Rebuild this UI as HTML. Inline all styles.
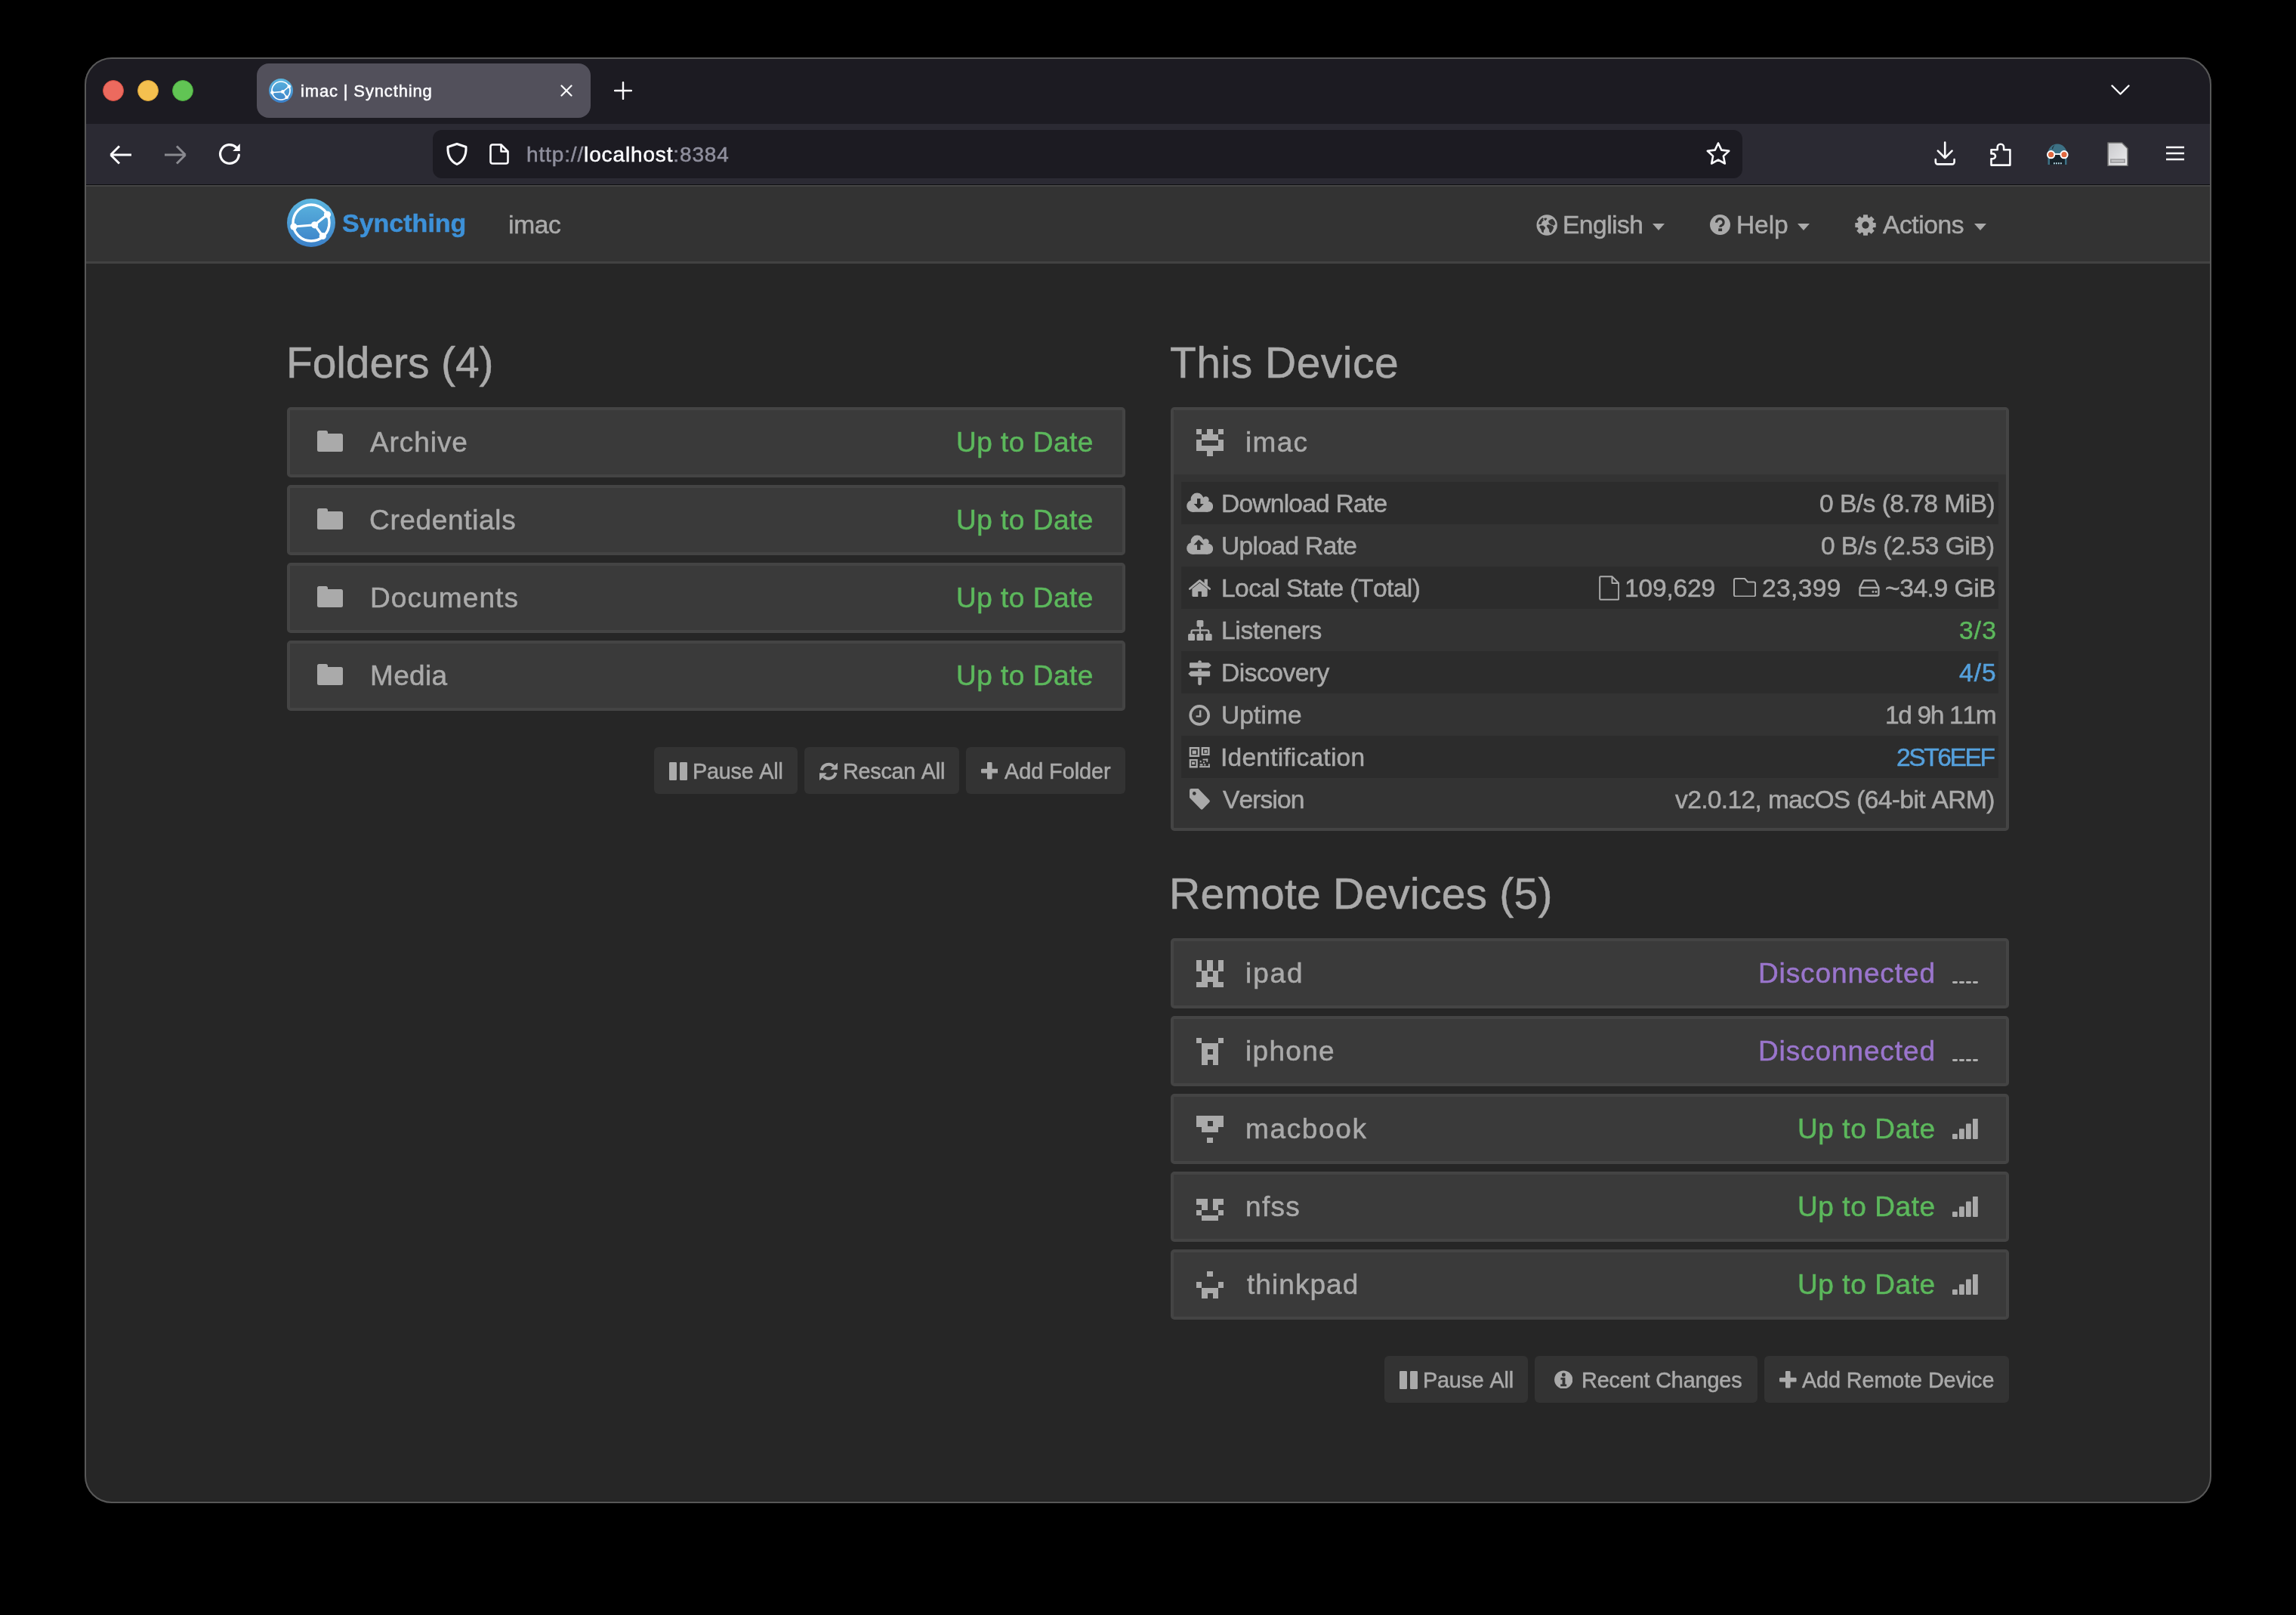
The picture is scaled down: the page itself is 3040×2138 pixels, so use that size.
<!DOCTYPE html>
<html><head><meta charset="utf-8"><title>imac | Syncthing</title>
<style>
html,body{margin:0;padding:0;}
body{width:3040px;height:2138px;background:#000;position:relative;overflow:hidden;font-family:"Liberation Sans",sans-serif;}
.t{position:absolute;white-space:pre;font-kerning:none;will-change:transform;-webkit-text-stroke:0.5px currentColor;}
.r{position:absolute;display:block;}
</style></head><body>
<div class="r" style="left:112px;top:76px;width:2816px;height:1914px;border-radius:36px;background:#262626;overflow:hidden;"><div class="r" style="left:0;top:0;width:100%;height:88px;background:#1c1b22"></div><div class="r" style="left:0;top:88px;width:100%;height:80px;background:#2b2a33"></div><div class="r" style="left:0;top:168px;width:100%;height:1px;background:#0e0e11"></div><div class="r" style="left:0;top:169px;width:100%;height:101px;background:#333333"></div><div class="r" style="left:0;top:169px;width:100%;height:2px;background:#454545"></div><div class="r" style="left:0;top:270px;width:100%;height:3px;background:#424242"></div></div>
<div class="r" style="left:112px;top:76px;width:2816px;height:1914px;border-radius:36px;box-sizing:border-box;border:2px solid #585858;"></div>
<div class="r" style="left:136px;top:106px;width:28px;height:28px;border-radius:50%;background:#ec6a5e;box-sizing:border-box;border:1px solid #d14b3f"></div>
<div class="r" style="left:182px;top:106px;width:28px;height:28px;border-radius:50%;background:#f4c04f;box-sizing:border-box;border:1px solid #d6a036"></div>
<div class="r" style="left:228px;top:106px;width:28px;height:28px;border-radius:50%;background:#61c454;box-sizing:border-box;border:1px solid #4aa63d"></div>
<div class="r" style="left:340px;top:84px;width:442px;height:72px;background:#52505b;border-radius:16px;"></div>
<svg class="r" style="left:356px;top:104px;width:32px;height:32px;" viewBox="4 4 64 64" preserveAspectRatio="none"><defs><linearGradient id="lga" x1="0" y1="0" x2="0" y2="1"><stop offset="0" stop-color="#5cb6df"/><stop offset="1" stop-color="#3b80c8"/></linearGradient></defs><circle cx="36" cy="36" r="32" fill="url(#lga)"/><circle cx="36" cy="36" r="24" fill="none" stroke="#fff" stroke-width="3.4"/><path d="M12.9 41 L40.6 38.8 L57.5 25 M40.6 38.8 L51.3 53.5" stroke="#fff" stroke-width="3.2" fill="none"/><circle cx="12.9" cy="41" r="4.6" fill="#fff"/><circle cx="40.6" cy="38.8" r="4.6" fill="#fff"/><circle cx="57.5" cy="25" r="4.6" fill="#fff"/><circle cx="51.3" cy="53.5" r="4.6" fill="#fff"/></svg>
<div class="t" style="left:397.90px;top:110.18px;font-size:22px;line-height:22px;letter-spacing:0.855px;color:#fbfbfe;font-weight:400;">imac | Syncthing</div>
<svg class="r" style="left:742px;top:112px;width:16px;height:16px;" viewBox="0 0 16 16" preserveAspectRatio="none"><path d="M1.5 1.5 L14.5 14.5 M14.5 1.5 L1.5 14.5" stroke="#fbfbfe" stroke-width="2.2" stroke-linecap="round"/></svg>
<svg class="r" style="left:813px;top:108px;width:24px;height:24px;" viewBox="0 0 24 24" preserveAspectRatio="none"><path d="M12 1 V23 M1 12 H23" stroke="#fbfbfe" stroke-width="2.4" stroke-linecap="round"/></svg>
<svg class="r" style="left:2795px;top:112px;width:25px;height:15px;" viewBox="0 0 25 15" preserveAspectRatio="none"><path d="M1.5 1.5 L12.5 12.5 L23.5 1.5" stroke="#fbfbfe" stroke-width="2.4" fill="none" stroke-linecap="round" stroke-linejoin="round"/></svg>
<svg class="r" style="left:144px;top:190px;width:32px;height:30px;" viewBox="0 0 32 30" preserveAspectRatio="none"><path d="M2.5 15 H30 M2.5 15 L14 3.5 M2.5 15 L14 26.5" stroke="#fbfbfe" stroke-width="3" fill="none" stroke-linecap="butt"/></svg>
<svg class="r" style="left:216px;top:190px;width:32px;height:30px;" viewBox="0 0 32 30" preserveAspectRatio="none"><path d="M29.5 15 H2 M29.5 15 L18 3.5 M29.5 15 L18 26.5" stroke="#8a8a90" stroke-width="3" fill="none"/></svg>
<svg class="r" style="left:288px;top:188px;width:32px;height:32px;" viewBox="0 0 32 32" preserveAspectRatio="none"><path d="M28.35 17.08 A12.4 12.4 0 1 1 24.77 7.23" stroke="#fbfbfe" stroke-width="3.2" fill="none" stroke-linecap="round"/><path d="M29.8 2.2 V12.1 H20.2 Z" fill="#fbfbfe"/></svg>
<div class="r" style="left:573px;top:172px;width:1734px;height:64px;background:#1c1b22;border-radius:12px;"></div>
<svg class="r" style="left:590px;top:188px;width:30px;height:32px;" viewBox="0 0 30 32" preserveAspectRatio="none"><path d="M15 2.5 L27 6.5 C27.5 17 23.5 25.5 15 29.5 C6.5 25.5 2.5 17 3 6.5 Z" stroke="#fbfbfe" stroke-width="3" fill="none" stroke-linejoin="round"/></svg>
<svg class="r" style="left:648px;top:190px;width:26px;height:28px;" viewBox="0 0 26 28" preserveAspectRatio="none"><path d="M4 1.5 H15.5 L24.5 10.5 V24 A2.5 2.5 0 0 1 22 26.5 H4 A2.5 2.5 0 0 1 1.5 24 V4 A2.5 2.5 0 0 1 4 1.5 Z M15.5 1.5 V10.5 H24.5" stroke="#fbfbfe" stroke-width="2.6" fill="none" stroke-linejoin="round"/></svg>
<div class="t" style="left:696.77px;top:191.30px;font-size:28px;line-height:28px;letter-spacing:0.861px;color:#8f8f9d">http:<span>&#47;&#47;</span><span style="color:#fbfbfe">localhost</span>:8384</div>
<svg class="r" style="left:2258px;top:187px;width:34px;height:34px;" viewBox="0 0 34 34" preserveAspectRatio="none"><path d="M17 2.5 L21.3 11.6 L31.2 12.8 L23.9 19.6 L25.8 29.5 L17 24.6 L8.2 29.5 L10.1 19.6 L2.8 12.8 L12.7 11.6 Z" stroke="#fbfbfe" stroke-width="2.6" fill="none" stroke-linejoin="round"/></svg>
<svg class="r" style="left:2561px;top:187px;width:28px;height:32px;" viewBox="0 0 28 32" preserveAspectRatio="none"><path d="M14.2 1.6 V21.6 M4.8 12.6 L14.2 22 L23.6 12.6 M1.8 24 V27.6 A2.8 2.8 0 0 0 4.6 30.4 H23.8 A2.8 2.8 0 0 0 26.6 27.6 V24" stroke="#fbfbfe" stroke-width="2.6" fill="none" stroke-linejoin="round" stroke-linecap="round"/></svg>
<svg class="r" style="left:2634px;top:187px;width:30px;height:34px;" viewBox="0 0 30 34" preserveAspectRatio="none"><path d="M2.5 11.3 H10.7 V8 A4.2 4.2 0 1 1 19.1 8 V11.3 H27.4 V31.6 H2.5 V23.2 H4.6 A3.4 3.4 0 0 0 4.6 16.4 H2.5 Z" stroke="#fbfbfe" stroke-width="2.6" fill="none" stroke-linejoin="round"/></svg>
<svg class="r" style="left:2708px;top:188px;width:32px;height:32px;" viewBox="0 0 32 32" preserveAspectRatio="none"><path d="M3.5 30 V15 A12.5 12.5 0 0 1 28.5 15 V30 Z" fill="#3d7185"/><path d="M6 30 V17 H26 V30 Z" fill="#17222a"/><path d="M9 8 A10 10 0 0 1 14 3 A9 9 0 0 0 10 10 Z" fill="#17222a"/><circle cx="7.6" cy="16.7" r="4.6" fill="#e0683f" stroke="#fff" stroke-width="2"/><circle cx="25" cy="16.7" r="4.6" fill="#e0683f" stroke="#fff" stroke-width="2"/><path d="M12 16 H20.5" stroke="#fff" stroke-width="1.8"/><rect x="11" y="27" width="1.8" height="2.4" rx="0.9" fill="#bfe3ee"/><rect x="14" y="27" width="1.8" height="2.4" rx="0.9" fill="#bfe3ee"/><rect x="17" y="27" width="1.8" height="2.4" rx="0.9" fill="#bfe3ee"/><rect x="20" y="27" width="1.8" height="2.4" rx="0.9" fill="#bfe3ee"/></svg>
<svg class="r" style="left:2790px;top:187.5px;width:28px;height:32.5px;" viewBox="0 0 28 32.5" preserveAspectRatio="none"><defs><linearGradient id="dg" x1="0" y1="0" x2="1" y2="1"><stop offset="0" stop-color="#c9c9cc"/><stop offset="1" stop-color="#ececee"/></linearGradient></defs><path d="M1 1 H19.5 L27 8.5 V31.5 H1 Z" fill="url(#dg)" stroke="#707070" stroke-width="1.6" stroke-linejoin="round"/><rect x="4" y="22.3" width="20" height="5.5" fill="#9b9b9d"/><rect x="5.6" y="23.8" width="16.8" height="2.4" fill="#c4c4c6"/></svg>
<svg class="r" style="left:2868px;top:193px;width:24px;height:20px;" viewBox="0 0 24 20" preserveAspectRatio="none"><path d="M0 2 H24 M0 10 H24 M0 18 H24" stroke="#fbfbfe" stroke-width="2.4"/></svg>
<svg class="r" style="left:380px;top:263px;width:64px;height:64px;" viewBox="4 4 64 64" preserveAspectRatio="none"><defs><linearGradient id="lgb" x1="0" y1="0" x2="0" y2="1"><stop offset="0" stop-color="#5cb6df"/><stop offset="1" stop-color="#3b80c8"/></linearGradient></defs><circle cx="36" cy="36" r="32" fill="url(#lgb)"/><circle cx="36" cy="36" r="24" fill="none" stroke="#fff" stroke-width="3.4"/><path d="M12.9 41 L40.6 38.8 L57.5 25 M40.6 38.8 L51.3 53.5" stroke="#fff" stroke-width="3.2" fill="none"/><circle cx="12.9" cy="41" r="4.6" fill="#fff"/><circle cx="40.6" cy="38.8" r="4.6" fill="#fff"/><circle cx="57.5" cy="25" r="4.6" fill="#fff"/><circle cx="51.3" cy="53.5" r="4.6" fill="#fff"/></svg>
<div class="t" style="left:452.80px;top:278.22px;font-size:34px;line-height:34px;letter-spacing:0.004px;color:#3d91d8;font-weight:700;">Syncthing</div>
<div class="t" style="left:673.00px;top:280.56px;font-size:33.6px;line-height:33.6px;letter-spacing:-0.335px;color:#aaa;font-weight:400;">imac</div>
<svg class="r" style="left:2034px;top:283.5px;width:28px;height:28.0px;" viewBox="0 0 28 28" preserveAspectRatio="none"><circle cx="14.2" cy="14" r="13.7" fill="#aaa"/><path d="M8 4.7 L9.3 5.2 L8.6 6.9 L9.6 7.8 L7.3 9.8 L6.7 12.4 L4.7 12.7 L3.3 12.4 L4.1 10.1 L5.7 7.2 Z" fill="#333" stroke="#333" stroke-width="0.8" stroke-linejoin="round"/><path d="M10.9 5.2 L13.5 4.9 L13.9 5.9 L11.9 7.8 L10.6 5.9 Z" fill="#333" stroke="#333" stroke-width="0.8" stroke-linejoin="round"/><path d="M5.4 15 L9.3 15 L11.6 17 L11.3 18.9 L9.6 20.9 L9.3 23.8 L7.7 22.9 L6.7 19.6 L4.7 17 Z" fill="#333" stroke="#333" stroke-width="0.8" stroke-linejoin="round"/><path d="M16.5 8.5 L19.1 6.9 L21.7 6.2 L24 9.1 L25 12.4 L23.3 14.4 L21.7 13.7 L19.7 13.1 L18.1 11.8 L17.1 11.1 L16.8 9.5 Z" fill="#333" stroke="#333" stroke-width="0.8" stroke-linejoin="round"/><path d="M14.5 14 L17.1 13.7 L19.4 14.4 L22 15.7 L22.7 17.6 L21.4 20.9 L19.1 24.2 L17.8 22.9 L17.1 19.3 L14.8 16.3 L14.2 15 Z" fill="#333" stroke="#333" stroke-width="0.8" stroke-linejoin="round"/></svg>
<div class="t" style="left:2068.90px;top:281.06px;font-size:33.6px;line-height:33.6px;letter-spacing:-0.526px;color:#aaa;font-weight:400;">English</div>
<svg class="r" style="left:2188px;top:296px;width:16px;height:9px;" viewBox="0 0 16 9" preserveAspectRatio="none"><path d="M0 0 H16 L8 9 Z" fill="#aaa"/></svg>
<svg class="r" style="left:2264px;top:284px;width:27px;height:27px;" viewBox="0 0 27 27" preserveAspectRatio="none"><circle cx="13.5" cy="13.5" r="13.5" fill="#aaa"/><path d="M8.8 10.6 A4.65 4.65 0 1 1 15.6 14.3 Q13.7 15.1 13.7 16.8" stroke="#333" stroke-width="3.3" fill="none"/><rect x="11.2" y="18.4" width="4.9" height="3.7" fill="#333"/></svg>
<div class="t" style="left:2299.00px;top:281.06px;font-size:33.6px;line-height:33.6px;letter-spacing:-0.128px;color:#aaa;font-weight:400;">Help</div>
<svg class="r" style="left:2380px;top:296px;width:16px;height:9px;" viewBox="0 0 16 9" preserveAspectRatio="none"><path d="M0 0 H16 L8 9 Z" fill="#aaa"/></svg>
<svg class="r" style="left:2455.8px;top:283.7px;width:28.0px;height:28.0px;" viewBox="0 0 28 28" preserveAspectRatio="none"><path d="M10.86 4.19 L11.08 0.31 L16.92 0.31 L17.14 4.19 L18.71 4.84 L21.62 2.25 L25.75 6.38 L23.16 9.29 L23.81 10.86 L27.69 11.08 L27.69 16.92 L23.81 17.14 L23.16 18.71 L25.75 21.62 L21.62 25.75 L18.71 23.16 L17.14 23.81 L16.92 27.69 L11.08 27.69 L10.86 23.81 L9.29 23.16 L6.38 25.75 L2.25 21.62 L4.84 18.71 L4.19 17.14 L0.31 16.92 L0.31 11.08 L4.19 10.86 L4.84 9.29 L2.25 6.38 L6.38 2.25 L9.29 4.84 Z" fill="#aaa"/><circle cx="14" cy="14" r="10.5" fill="#aaa"/><circle cx="14" cy="14" r="4.7" fill="#333"/></svg>
<div class="t" style="left:2493.20px;top:281.06px;font-size:33.6px;line-height:33.6px;letter-spacing:-0.421px;color:#aaa;font-weight:400;">Actions</div>
<svg class="r" style="left:2614px;top:296px;width:16px;height:9px;" viewBox="0 0 16 9" preserveAspectRatio="none"><path d="M0 0 H16 L8 9 Z" fill="#aaa"/></svg>
<div class="t" style="left:378.50px;top:452.35px;font-size:57px;line-height:57px;letter-spacing:-0.108px;color:#aaa;font-weight:400;">Folders (4)</div>
<div class="t" style="left:1549.20px;top:451.75px;font-size:57px;line-height:57px;letter-spacing:0.495px;color:#aaa;font-weight:400;">This Device</div>
<div class="t" style="left:1547.90px;top:1154.95px;font-size:57px;line-height:57px;letter-spacing:0.225px;color:#aaa;font-weight:400;">Remote Devices (5)</div>
<div class="r" style="left:380px;top:539px;width:1110px;height:93px;background:#3a3a3a;box-sizing:border-box;border:4px solid #444;border-radius:5px;"></div>
<svg class="r" style="left:420px;top:570px;width:34px;height:28px;" viewBox="0 0 34 28" preserveAspectRatio="none"><path d="M2.5 0 H11.5 A2.5 2.5 0 0 1 14 2.5 V4 H31.5 A2.5 2.5 0 0 1 34 6.5 V25.5 A2.5 2.5 0 0 1 31.5 28 H2.5 A2.5 2.5 0 0 1 0 25.5 V2.5 A2.5 2.5 0 0 1 2.5 0 Z" fill="#aaa"/></svg>
<div class="t" style="left:489.70px;top:566.68px;font-size:37px;line-height:37px;letter-spacing:0.917px;color:#aaa;font-weight:400;">Archive</div>
<div class="t" style="left:1266.20px;top:566.68px;font-size:37px;line-height:37px;letter-spacing:0.501px;color:#5cb85c;font-weight:400;">Up to Date</div>
<div class="r" style="left:380px;top:642px;width:1110px;height:93px;background:#3a3a3a;box-sizing:border-box;border:4px solid #444;border-radius:5px;"></div>
<svg class="r" style="left:420px;top:673px;width:34px;height:28px;" viewBox="0 0 34 28" preserveAspectRatio="none"><path d="M2.5 0 H11.5 A2.5 2.5 0 0 1 14 2.5 V4 H31.5 A2.5 2.5 0 0 1 34 6.5 V25.5 A2.5 2.5 0 0 1 31.5 28 H2.5 A2.5 2.5 0 0 1 0 25.5 V2.5 A2.5 2.5 0 0 1 2.5 0 Z" fill="#aaa"/></svg>
<div class="t" style="left:489.00px;top:669.68px;font-size:37px;line-height:37px;letter-spacing:0.655px;color:#aaa;font-weight:400;">Credentials</div>
<div class="t" style="left:1266.20px;top:669.68px;font-size:37px;line-height:37px;letter-spacing:0.501px;color:#5cb85c;font-weight:400;">Up to Date</div>
<div class="r" style="left:380px;top:745px;width:1110px;height:93px;background:#3a3a3a;box-sizing:border-box;border:4px solid #444;border-radius:5px;"></div>
<svg class="r" style="left:420px;top:776px;width:34px;height:28px;" viewBox="0 0 34 28" preserveAspectRatio="none"><path d="M2.5 0 H11.5 A2.5 2.5 0 0 1 14 2.5 V4 H31.5 A2.5 2.5 0 0 1 34 6.5 V25.5 A2.5 2.5 0 0 1 31.5 28 H2.5 A2.5 2.5 0 0 1 0 25.5 V2.5 A2.5 2.5 0 0 1 2.5 0 Z" fill="#aaa"/></svg>
<div class="t" style="left:489.50px;top:772.68px;font-size:37px;line-height:37px;letter-spacing:1.109px;color:#aaa;font-weight:400;">Documents</div>
<div class="t" style="left:1266.20px;top:772.68px;font-size:37px;line-height:37px;letter-spacing:0.501px;color:#5cb85c;font-weight:400;">Up to Date</div>
<div class="r" style="left:380px;top:848px;width:1110px;height:93px;background:#3a3a3a;box-sizing:border-box;border:4px solid #444;border-radius:5px;"></div>
<svg class="r" style="left:420px;top:879px;width:34px;height:28px;" viewBox="0 0 34 28" preserveAspectRatio="none"><path d="M2.5 0 H11.5 A2.5 2.5 0 0 1 14 2.5 V4 H31.5 A2.5 2.5 0 0 1 34 6.5 V25.5 A2.5 2.5 0 0 1 31.5 28 H2.5 A2.5 2.5 0 0 1 0 25.5 V2.5 A2.5 2.5 0 0 1 2.5 0 Z" fill="#aaa"/></svg>
<div class="t" style="left:490.00px;top:875.68px;font-size:37px;line-height:37px;letter-spacing:0.351px;color:#aaa;font-weight:400;">Media</div>
<div class="t" style="left:1266.20px;top:875.68px;font-size:37px;line-height:37px;letter-spacing:0.501px;color:#5cb85c;font-weight:400;">Up to Date</div>
<div class="r" style="left:866px;top:989px;width:190px;height:62px;background:#333;border-radius:6px;"></div>
<svg class="r" style="left:886px;top:1009px;width:24px;height:24px;" viewBox="0 0 24 24" preserveAspectRatio="none"><rect x="0" y="0" width="10" height="24" rx="1.2" fill="#aaa"/><rect x="14" y="0" width="10" height="24" rx="1.2" fill="#aaa"/></svg>
<div class="t" style="left:916.80px;top:1006.62px;font-size:28.8px;line-height:28.8px;letter-spacing:-0.232px;color:#aaa;font-weight:400;">Pause All</div>
<div class="r" style="left:1065px;top:989px;width:205px;height:62px;background:#333;border-radius:6px;"></div>
<svg class="r" style="left:1085px;top:1009px;width:24.40000000000009px;height:24.40000000000009px;" viewBox="0 0 24.4 24.4" preserveAspectRatio="none"><path d="M2.94 10.57 A9.4 9.4 0 0 1 18.85 5.55" stroke="#aaa" stroke-width="4" fill="none"/><path d="M24.4 0.6 V9.6 H15.4 Z" fill="#aaa" stroke="#aaa" stroke-width="0.8" stroke-linejoin="round"/><path d="M21.46 13.83 A9.4 9.4 0 0 1 5.55 18.85" stroke="#aaa" stroke-width="4" fill="none"/><path d="M0 23.8 V14.8 H9 Z" fill="#aaa" stroke="#aaa" stroke-width="0.8" stroke-linejoin="round"/></svg>
<div class="t" style="left:1115.50px;top:1006.62px;font-size:28.8px;line-height:28.8px;letter-spacing:-0.261px;color:#aaa;font-weight:400;">Rescan All</div>
<div class="r" style="left:1279px;top:989px;width:211px;height:62px;background:#333;border-radius:6px;"></div>
<svg class="r" style="left:1298.8px;top:1009px;width:22.600000000000136px;height:22.59999999999991px;" viewBox="0 0 22.6 22.6" preserveAspectRatio="none"><path d="M8.7 0 H13.3 A1.3 1.3 0 0 1 14.6 1.3 V8.7 H21.3 A1.3 1.3 0 0 1 22.6 10 V13.3 A1.3 1.3 0 0 1 21.3 14.6 H14.6 V21.3 A1.3 1.3 0 0 1 13.3 22.6 H9.3 A1.3 1.3 0 0 1 8 21.3 V14.6 H1.3 A1.3 1.3 0 0 1 0 13.3 V10 A1.3 1.3 0 0 1 1.3 8.7 H8 V1.3 A1.3 1.3 0 0 1 8.7 0 Z" fill="#aaa"/></svg>
<div class="t" style="left:1330.00px;top:1006.62px;font-size:28.8px;line-height:28.8px;letter-spacing:-0.030px;color:#aaa;font-weight:400;">Add Folder</div>
<div class="r" style="left:1550px;top:539px;width:1110px;height:561px;background:#333333;box-sizing:border-box;border:4px solid #444;border-radius:5px;"></div>
<div class="r" style="left:1554px;top:543px;width:1102px;height:85px;background:#3a3a3a;border-radius:2px 2px 0 0;"></div>
<svg class="r" style="left:1584px;top:568px;width:36px;height:36px;shape-rendering:crispEdges;" viewBox="0 0 5 5" preserveAspectRatio="none"><rect x="0" y="0" width="1.02" height="1.02" fill="#aaa"/><rect x="2" y="0" width="1.02" height="1.02" fill="#aaa"/><rect x="4" y="0" width="1.02" height="1.02" fill="#aaa"/><rect x="1" y="1" width="1.02" height="1.02" fill="#aaa"/><rect x="2" y="1" width="1.02" height="1.02" fill="#aaa"/><rect x="3" y="1" width="1.02" height="1.02" fill="#aaa"/><rect x="0" y="2" width="1.02" height="1.02" fill="#aaa"/><rect x="4" y="2" width="1.02" height="1.02" fill="#aaa"/><rect x="0" y="3" width="1.02" height="1.02" fill="#aaa"/><rect x="1" y="3" width="1.02" height="1.02" fill="#aaa"/><rect x="2" y="3" width="1.02" height="1.02" fill="#aaa"/><rect x="3" y="3" width="1.02" height="1.02" fill="#aaa"/><rect x="4" y="3" width="1.02" height="1.02" fill="#aaa"/><rect x="2" y="4" width="1.02" height="1.02" fill="#aaa"/></svg>
<div class="t" style="left:1648.90px;top:566.88px;font-size:37px;line-height:37px;letter-spacing:1.294px;color:#aaa;font-weight:400;">imac</div>
<div class="r" style="left:1564px;top:638px;width:1082px;height:56px;background:#2c2c2c;"></div>
<div class="r" style="left:1564px;top:750px;width:1082px;height:56px;background:#2c2c2c;"></div>
<div class="r" style="left:1564px;top:862px;width:1082px;height:56px;background:#2c2c2c;"></div>
<div class="r" style="left:1564px;top:974px;width:1082px;height:56px;background:#2c2c2c;"></div>
<div class="t" style="left:1617.20px;top:649.56px;font-size:33.6px;line-height:33.6px;letter-spacing:-0.793px;color:#aaa;font-weight:400;">Download Rate</div>
<div class="t" style="left:1617.20px;top:705.56px;font-size:33.6px;line-height:33.6px;letter-spacing:-0.669px;color:#aaa;font-weight:400;">Upload Rate</div>
<div class="t" style="left:1617.20px;top:761.56px;font-size:33.6px;line-height:33.6px;letter-spacing:-0.580px;color:#aaa;font-weight:400;">Local State (Total)</div>
<div class="t" style="left:1617.20px;top:817.56px;font-size:33.6px;line-height:33.6px;letter-spacing:-0.370px;color:#aaa;font-weight:400;">Listeners</div>
<div class="t" style="left:1617.20px;top:873.56px;font-size:33.6px;line-height:33.6px;letter-spacing:-0.513px;color:#aaa;font-weight:400;">Discovery</div>
<div class="t" style="left:1617.20px;top:929.56px;font-size:33.6px;line-height:33.6px;letter-spacing:0.043px;color:#aaa;font-weight:400;">Uptime</div>
<div class="t" style="left:1616.20px;top:985.56px;font-size:33.6px;line-height:33.6px;letter-spacing:0.196px;color:#aaa;font-weight:400;">Identification</div>
<div class="t" style="left:1619.20px;top:1041.56px;font-size:33.6px;line-height:33.6px;letter-spacing:-0.887px;color:#aaa;font-weight:400;">Version</div>
<div class="t" style="left:2408.60px;top:649.56px;font-size:33.6px;line-height:33.6px;letter-spacing:-0.536px;color:#aaa;font-weight:400;">0 B/s (8.78 MiB)</div>
<div class="t" style="left:2411.20px;top:705.56px;font-size:33.6px;line-height:33.6px;letter-spacing:-0.586px;color:#aaa;font-weight:400;">0 B/s (2.53 GiB)</div>
<div class="t" style="left:2593.90px;top:817.56px;font-size:33.6px;line-height:33.6px;letter-spacing:1.098px;color:#5cb85c;font-weight:400;">3/3</div>
<div class="t" style="left:2594.00px;top:873.56px;font-size:33.6px;line-height:33.6px;letter-spacing:1.048px;color:#55a0dc;font-weight:400;">4/5</div>
<div class="t" style="left:2495.90px;top:929.56px;font-size:33.6px;line-height:33.6px;letter-spacing:-1.377px;color:#aaa;font-weight:400;">1d 9h 11m</div>
<div class="t" style="left:2511.20px;top:985.56px;font-size:33.6px;line-height:33.6px;letter-spacing:-2.442px;color:#55a0dc;font-weight:400;">2ST6EEF</div>
<div class="t" style="left:2217.50px;top:1041.56px;font-size:33.6px;line-height:33.6px;letter-spacing:-0.654px;color:#aaa;font-weight:400;">v2.0.12, macOS (64-bit ARM)</div>
<svg class="r" style="left:2116.8px;top:762px;width:27.399999999999636px;height:33px;" viewBox="0 0 27.4 33" preserveAspectRatio="none"><path d="M1.2 2.2 A1 1 0 0 1 2.2 1.2 H17.5 L26.2 10 V30.8 A1 1 0 0 1 25.2 31.8 H2.2 A1 1 0 0 1 1.2 30.8 Z M17.5 1.2 V10 H26.2" stroke="#aaa" stroke-width="2" fill="none" stroke-linejoin="round"/></svg>
<div class="t" style="left:2150.90px;top:761.56px;font-size:33.6px;line-height:33.6px;letter-spacing:-0.184px;color:#aaa;font-weight:400;">109,629</div>
<svg class="r" style="left:2294.7px;top:764.8px;width:30.100000000000364px;height:25.40000000000009px;" viewBox="0 0 30 25.4" preserveAspectRatio="none"><path d="M3 1 H15 L19 5.5 H27 A2 2 0 0 1 29 7.5 V22.4 A2 2 0 0 1 27 24.4 H3 A2 2 0 0 1 1 22.4 V3 A2 2 0 0 1 3 1 Z" stroke="#aaa" stroke-width="2" fill="none" stroke-linejoin="round"/></svg>
<div class="t" style="left:2332.90px;top:761.56px;font-size:33.6px;line-height:33.6px;letter-spacing:0.335px;color:#aaa;font-weight:400;">23,399</div>
<svg class="r" style="left:2460.7px;top:767px;width:27.90000000000009px;height:23px;" viewBox="0 0 28 23" preserveAspectRatio="none"><path d="M6.5 1.5 H21.5 L26.5 11 V20 A1.5 1.5 0 0 1 25 21.5 H3 A1.5 1.5 0 0 1 1.5 20 V11 Z M1.5 11 H26.5" stroke="#aaa" stroke-width="2.4" fill="none" stroke-linejoin="round"/><circle cx="19" cy="16.5" r="1.4" fill="#aaa"/><circle cx="23" cy="16.5" r="1.4" fill="#aaa"/></svg>
<div class="t" style="left:2496.40px;top:761.56px;font-size:33.6px;line-height:33.6px;letter-spacing:-0.446px;color:#aaa;font-weight:400;">~34.9 GiB</div>
<svg class="r" style="left:1571.3px;top:652px;width:34.5px;height:26px;" viewBox="0 0 34.5 26" preserveAspectRatio="none"><circle cx="14" cy="8.9" r="8.4" fill="#aaa"/><circle cx="25.5" cy="9.4" r="4.2" fill="#aaa"/><circle cx="28" cy="18.6" r="7.2" fill="#aaa"/><circle cx="8.2" cy="17.9" r="8" fill="#aaa"/><rect x="8.2" y="12" width="19.8" height="13.8" fill="#aaa"/><path d="M14 8 H18.4 V15 H22.8 L16.2 21.8 L9.6 15 H14 Z" fill="#2c2c2c"/></svg>
<svg class="r" style="left:1571.3px;top:708px;width:34.5px;height:26px;" viewBox="0 0 34.5 26" preserveAspectRatio="none"><circle cx="14" cy="8.9" r="8.4" fill="#aaa"/><circle cx="25.5" cy="9.4" r="4.2" fill="#aaa"/><circle cx="28" cy="18.6" r="7.2" fill="#aaa"/><circle cx="8.2" cy="17.9" r="8" fill="#aaa"/><rect x="8.2" y="12" width="19.8" height="13.8" fill="#aaa"/><path d="M14 20 H18.4 V13.2 H22.8 L16.2 6.2 L9.6 13.2 H14 Z" fill="#333"/></svg>
<svg class="r" style="left:1574px;top:766px;width:29px;height:24px;" viewBox="0 -1 29 24" preserveAspectRatio="none"><path d="M1.3 12.5 L14.5 1.7 L27.7 12.5" stroke="#aaa" stroke-width="2.8" stroke-linecap="round" stroke-linejoin="round" fill="none"/><path d="M20.6 -0.3 H24.9 V9 L20.6 5.5 Z" fill="#aaa"/><path d="M4.4 12.4 L14.5 4.6 L24.7 12.4 V21.6 A1.4 1.4 0 0 1 23.3 23 H16.9 V16 H12.3 V23 H5.8 A1.4 1.4 0 0 1 4.4 21.6 Z" fill="#aaa"/></svg>
<svg class="r" style="left:1572.5px;top:821px;width:32.0px;height:27px;" viewBox="0 0 32 27" preserveAspectRatio="none"><rect x="11.6" y="0" width="8.8" height="8.8" rx="1.6" fill="#aaa"/><path d="M16 8 V18.5 M4.5 18.5 V15.4 A2 2 0 0 1 6.5 13.4 H25.4 A2 2 0 0 1 27.4 15.4 V18.5" stroke="#aaa" stroke-width="2.3" fill="none"/><rect x="0.1" y="18.1" width="8.9" height="9" rx="1.6" fill="#aaa"/><rect x="11.6" y="18.1" width="8.8" height="9" rx="1.6" fill="#aaa"/><rect x="23" y="18.1" width="8.7" height="9" rx="1.6" fill="#aaa"/></svg>
<svg class="r" style="left:1572px;top:873.5px;width:34px;height:34.0px;" viewBox="0 -1 34 34" preserveAspectRatio="none"><path d="M14.2 2.3 V1.6 A2.35 2.35 0 0 1 18.9 1.6 V2.3 Z" fill="#aaa"/><path d="M3 3.3 A1 1 0 0 1 4 2.3 H28.3 L31.8 5.8 L28.3 9.3 H4 A1 1 0 0 1 3 8.3 Z" fill="#aaa"/><rect x="14.2" y="10.4" width="4.7" height="3.3" fill="#aaa"/><path d="M30.1 14.5 A1 1 0 0 0 29.1 13.5 H4.8 L1.2 17 L4.8 20.5 H29.1 A1 1 0 0 0 30.1 19.5 Z" fill="#aaa"/><path d="M14.2 21.4 H18.9 V30 A2.35 2.35 0 0 1 14.2 30 Z" fill="#aaa"/></svg>
<svg class="r" style="left:1574.3px;top:932.5px;width:28.0px;height:28.0px;" viewBox="0 0 28 28" preserveAspectRatio="none"><circle cx="14.2" cy="13.9" r="12" stroke="#aaa" stroke-width="3.6" fill="none"/><path d="M15.2 7.2 V15.4 H9.6" stroke="#aaa" stroke-width="2.4" fill="none"/></svg>
<svg class="r" style="left:1574.3px;top:988.7px;width:28.0px;height:28.0px;" viewBox="0 0 28 28" preserveAspectRatio="none"><path d="M1.9 1.3 H13 V11.8 H1.9 Z M17.8 1.3 H26.4 V9.9 H17.8 Z M1.9 17.1 H10.6 V26.2 H1.9 Z" stroke="#aaa" stroke-width="2.4" fill="none"/><rect x="4.6" y="4.4" width="5.3" height="4.8" fill="#aaa"/><rect x="20.4" y="3.9" width="3.9" height="3.8" fill="#aaa"/><rect x="4.1" y="19.7" width="3.9" height="3.4" fill="#aaa"/><rect x="18.5" y="15.6" width="6.7" height="1.9" fill="#aaa"/><rect x="23.4" y="15.6" width="1.8" height="4.2" fill="#aaa"/><rect x="14.7" y="17.9" width="1.9" height="2.4" fill="#aaa"/><rect x="14.7" y="22.2" width="3.8" height="2.4" fill="#aaa"/><rect x="20.4" y="22.2" width="1.9" height="2.4" fill="#aaa"/><rect x="14.2" y="25.1" width="8.6" height="2" fill="#aaa"/><rect x="25.9" y="22.2" width="1.9" height="4.9" fill="#aaa"/><rect x="22.5" y="25.1" width="5.3" height="2" fill="#aaa"/><rect x="19" y="19.3" width="2" height="2" fill="#aaa"/></svg>
<svg class="r" style="left:1575px;top:1044.4px;width:27px;height:27.799999999999955px;" viewBox="0 0 28 28" preserveAspectRatio="none"><path d="M0 2.5 A2.5 2.5 0 0 1 2.5 0 H12 L27 15 A2.5 2.5 0 0 1 27 18.5 L18.5 27 A2.5 2.5 0 0 1 15 27 L0 12 Z" fill="#aaa"/><circle cx="6.5" cy="6.5" r="2.4" fill="#323232"/></svg>
<div class="r" style="left:1550px;top:1242px;width:1110px;height:93px;background:#3a3a3a;box-sizing:border-box;border:4px solid #444;border-radius:5px;"></div>
<svg class="r" style="left:1584px;top:1271px;width:36px;height:36px;shape-rendering:crispEdges;" viewBox="0 0 5 5" preserveAspectRatio="none"><rect x="0" y="0" width="1.02" height="1.02" fill="#aaa"/><rect x="2" y="0" width="1.02" height="1.02" fill="#aaa"/><rect x="4" y="0" width="1.02" height="1.02" fill="#aaa"/><rect x="0" y="1" width="1.02" height="1.02" fill="#aaa"/><rect x="2" y="1" width="1.02" height="1.02" fill="#aaa"/><rect x="4" y="1" width="1.02" height="1.02" fill="#aaa"/><rect x="1" y="2" width="1.02" height="1.02" fill="#aaa"/><rect x="3" y="2" width="1.02" height="1.02" fill="#aaa"/><rect x="1" y="3" width="1.02" height="1.02" fill="#aaa"/><rect x="2" y="3" width="1.02" height="1.02" fill="#aaa"/><rect x="3" y="3" width="1.02" height="1.02" fill="#aaa"/><rect x="0" y="4" width="1.02" height="1.02" fill="#aaa"/><rect x="1" y="4" width="1.02" height="1.02" fill="#aaa"/><rect x="3" y="4" width="1.02" height="1.02" fill="#aaa"/><rect x="4" y="4" width="1.02" height="1.02" fill="#aaa"/></svg>
<div class="t" style="left:1648.90px;top:1269.68px;font-size:37px;line-height:37px;letter-spacing:1.908px;color:#aaa;font-weight:400;">ipad</div>
<div class="t" style="left:2328.00px;top:1269.68px;font-size:37px;line-height:37px;letter-spacing:0.890px;color:#9a75cc;font-weight:400;">Disconnected</div>
<svg class="r" style="left:2585px;top:1299px;width:34px;height:2.900000000000091px;" viewBox="0 0 34 2.9" preserveAspectRatio="none"><rect x="0" y="0" width="7" height="2.9" rx="1.4" fill="#b0b0b0"/><rect x="9" y="0" width="7" height="2.9" rx="1.4" fill="#b0b0b0"/><rect x="18" y="0" width="7" height="2.9" rx="1.4" fill="#b0b0b0"/><rect x="27" y="0" width="7" height="2.9" rx="1.4" fill="#b0b0b0"/></svg>
<div class="r" style="left:1550px;top:1345px;width:1110px;height:93px;background:#3a3a3a;box-sizing:border-box;border:4px solid #444;border-radius:5px;"></div>
<svg class="r" style="left:1584px;top:1374px;width:36px;height:36px;shape-rendering:crispEdges;" viewBox="0 0 5 5" preserveAspectRatio="none"><rect x="0" y="0" width="1.02" height="1.02" fill="#aaa"/><rect x="4" y="0" width="1.02" height="1.02" fill="#aaa"/><rect x="1" y="1" width="1.02" height="1.02" fill="#aaa"/><rect x="2" y="1" width="1.02" height="1.02" fill="#aaa"/><rect x="3" y="1" width="1.02" height="1.02" fill="#aaa"/><rect x="1" y="2" width="1.02" height="1.02" fill="#aaa"/><rect x="3" y="2" width="1.02" height="1.02" fill="#aaa"/><rect x="1" y="3" width="1.02" height="1.02" fill="#aaa"/><rect x="2" y="3" width="1.02" height="1.02" fill="#aaa"/><rect x="3" y="3" width="1.02" height="1.02" fill="#aaa"/><rect x="1" y="4" width="1.02" height="1.02" fill="#aaa"/><rect x="3" y="4" width="1.02" height="1.02" fill="#aaa"/></svg>
<div class="t" style="left:1648.90px;top:1372.68px;font-size:37px;line-height:37px;letter-spacing:1.314px;color:#aaa;font-weight:400;">iphone</div>
<div class="t" style="left:2328.00px;top:1372.68px;font-size:37px;line-height:37px;letter-spacing:0.890px;color:#9a75cc;font-weight:400;">Disconnected</div>
<svg class="r" style="left:2585px;top:1402px;width:34px;height:2.900000000000091px;" viewBox="0 0 34 2.9" preserveAspectRatio="none"><rect x="0" y="0" width="7" height="2.9" rx="1.4" fill="#b0b0b0"/><rect x="9" y="0" width="7" height="2.9" rx="1.4" fill="#b0b0b0"/><rect x="18" y="0" width="7" height="2.9" rx="1.4" fill="#b0b0b0"/><rect x="27" y="0" width="7" height="2.9" rx="1.4" fill="#b0b0b0"/></svg>
<div class="r" style="left:1550px;top:1448px;width:1110px;height:93px;background:#3a3a3a;box-sizing:border-box;border:4px solid #444;border-radius:5px;"></div>
<svg class="r" style="left:1584px;top:1477px;width:36px;height:36px;shape-rendering:crispEdges;" viewBox="0 0 5 5" preserveAspectRatio="none"><rect x="0" y="0" width="1.02" height="1.02" fill="#aaa"/><rect x="1" y="0" width="1.02" height="1.02" fill="#aaa"/><rect x="2" y="0" width="1.02" height="1.02" fill="#aaa"/><rect x="3" y="0" width="1.02" height="1.02" fill="#aaa"/><rect x="4" y="0" width="1.02" height="1.02" fill="#aaa"/><rect x="0" y="1" width="1.02" height="1.02" fill="#aaa"/><rect x="1" y="1" width="1.02" height="1.02" fill="#aaa"/><rect x="3" y="1" width="1.02" height="1.02" fill="#aaa"/><rect x="4" y="1" width="1.02" height="1.02" fill="#aaa"/><rect x="1" y="2" width="1.02" height="1.02" fill="#aaa"/><rect x="2" y="2" width="1.02" height="1.02" fill="#aaa"/><rect x="3" y="2" width="1.02" height="1.02" fill="#aaa"/><rect x="2" y="4" width="1.02" height="1.02" fill="#aaa"/></svg>
<div class="t" style="left:1648.60px;top:1475.68px;font-size:37px;line-height:37px;letter-spacing:1.628px;color:#aaa;font-weight:400;">macbook</div>
<div class="t" style="left:2380.40px;top:1475.68px;font-size:37px;line-height:37px;letter-spacing:0.590px;color:#5cb85c;font-weight:400;">Up to Date</div>
<svg class="r" style="left:2585px;top:1480.5px;width:34px;height:27.0px;" viewBox="0 0 34 27" preserveAspectRatio="none"><rect x="0" y="20.0" width="6.8" height="7.0" rx="1" fill="#aaa"/><rect x="9" y="13.2" width="6.8" height="13.8" rx="1" fill="#aaa"/><rect x="18" y="6.4" width="6.8" height="20.6" rx="1" fill="#aaa"/><rect x="27" y="-0.3999999999999999" width="6.8" height="27.4" rx="1" fill="#aaa"/></svg>
<div class="r" style="left:1550px;top:1551px;width:1110px;height:93px;background:#3a3a3a;box-sizing:border-box;border:4px solid #444;border-radius:5px;"></div>
<svg class="r" style="left:1584px;top:1580px;width:36px;height:36px;shape-rendering:crispEdges;" viewBox="0 0 5 5" preserveAspectRatio="none"><rect x="0" y="1" width="1.02" height="1.02" fill="#aaa"/><rect x="1" y="1" width="1.02" height="1.02" fill="#aaa"/><rect x="3" y="1" width="1.02" height="1.02" fill="#aaa"/><rect x="4" y="1" width="1.02" height="1.02" fill="#aaa"/><rect x="1" y="2" width="1.02" height="1.02" fill="#aaa"/><rect x="3" y="2" width="1.02" height="1.02" fill="#aaa"/><rect x="0" y="3" width="1.02" height="1.02" fill="#aaa"/><rect x="4" y="3" width="1.02" height="1.02" fill="#aaa"/><rect x="1" y="4" width="1.02" height="1.02" fill="#aaa"/><rect x="2" y="4" width="1.02" height="1.02" fill="#aaa"/><rect x="3" y="4" width="1.02" height="1.02" fill="#aaa"/></svg>
<div class="t" style="left:1648.70px;top:1578.68px;font-size:37px;line-height:37px;letter-spacing:1.314px;color:#aaa;font-weight:400;">nfss</div>
<div class="t" style="left:2380.40px;top:1578.68px;font-size:37px;line-height:37px;letter-spacing:0.590px;color:#5cb85c;font-weight:400;">Up to Date</div>
<svg class="r" style="left:2585px;top:1583.5px;width:34px;height:27.0px;" viewBox="0 0 34 27" preserveAspectRatio="none"><rect x="0" y="20.0" width="6.8" height="7.0" rx="1" fill="#aaa"/><rect x="9" y="13.2" width="6.8" height="13.8" rx="1" fill="#aaa"/><rect x="18" y="6.4" width="6.8" height="20.6" rx="1" fill="#aaa"/><rect x="27" y="-0.3999999999999999" width="6.8" height="27.4" rx="1" fill="#aaa"/></svg>
<div class="r" style="left:1550px;top:1654px;width:1110px;height:93px;background:#3a3a3a;box-sizing:border-box;border:4px solid #444;border-radius:5px;"></div>
<svg class="r" style="left:1584px;top:1683px;width:36px;height:36px;shape-rendering:crispEdges;" viewBox="0 0 5 5" preserveAspectRatio="none"><rect x="2" y="0" width="1.02" height="1.02" fill="#aaa"/><rect x="0" y="2" width="1.02" height="1.02" fill="#aaa"/><rect x="4" y="2" width="1.02" height="1.02" fill="#aaa"/><rect x="1" y="3" width="1.02" height="1.02" fill="#aaa"/><rect x="2" y="3" width="1.02" height="1.02" fill="#aaa"/><rect x="3" y="3" width="1.02" height="1.02" fill="#aaa"/><rect x="1" y="4" width="1.02" height="1.02" fill="#aaa"/><rect x="3" y="4" width="1.02" height="1.02" fill="#aaa"/></svg>
<div class="t" style="left:1650.50px;top:1681.68px;font-size:37px;line-height:37px;letter-spacing:1.056px;color:#aaa;font-weight:400;">thinkpad</div>
<div class="t" style="left:2380.40px;top:1681.68px;font-size:37px;line-height:37px;letter-spacing:0.590px;color:#5cb85c;font-weight:400;">Up to Date</div>
<svg class="r" style="left:2585px;top:1686.5px;width:34px;height:27.0px;" viewBox="0 0 34 27" preserveAspectRatio="none"><rect x="0" y="20.0" width="6.8" height="7.0" rx="1" fill="#aaa"/><rect x="9" y="13.2" width="6.8" height="13.8" rx="1" fill="#aaa"/><rect x="18" y="6.4" width="6.8" height="20.6" rx="1" fill="#aaa"/><rect x="27" y="-0.3999999999999999" width="6.8" height="27.4" rx="1" fill="#aaa"/></svg>
<div class="r" style="left:1833px;top:1795px;width:190px;height:62px;background:#333;border-radius:6px;"></div>
<svg class="r" style="left:1853px;top:1815px;width:24px;height:24px;" viewBox="0 0 24 24" preserveAspectRatio="none"><rect x="0" y="0" width="10" height="24" rx="1.2" fill="#aaa"/><rect x="14" y="0" width="10" height="24" rx="1.2" fill="#aaa"/></svg>
<div class="t" style="left:1883.50px;top:1812.62px;font-size:28.8px;line-height:28.8px;letter-spacing:-0.195px;color:#aaa;font-weight:400;">Pause All</div>
<div class="r" style="left:2032px;top:1795px;width:295px;height:62px;background:#333;border-radius:6px;"></div>
<svg class="r" style="left:2057.8px;top:1814px;width:24.399999999999636px;height:24.40000000000009px;" viewBox="0 0 24.4 24.4" preserveAspectRatio="none"><circle cx="12.2" cy="12.5" r="12.1" fill="#aaa"/><circle cx="12.4" cy="5.9" r="2.5" fill="#333"/><path d="M8.4 9.8 H14.4 V18.5 H16.2 V21.2 H8.2 V18.5 H10.6 V12.4 H8.4 Z" fill="#333"/></svg>
<div class="t" style="left:2093.80px;top:1812.62px;font-size:28.8px;line-height:28.8px;letter-spacing:-0.147px;color:#aaa;font-weight:400;">Recent Changes</div>
<div class="r" style="left:2336px;top:1795px;width:324px;height:62px;background:#333;border-radius:6px;"></div>
<svg class="r" style="left:2356.3px;top:1815px;width:22.59999999999991px;height:22.59999999999991px;" viewBox="0 0 22.6 22.6" preserveAspectRatio="none"><path d="M8.7 0 H13.3 A1.3 1.3 0 0 1 14.6 1.3 V8.7 H21.3 A1.3 1.3 0 0 1 22.6 10 V13.3 A1.3 1.3 0 0 1 21.3 14.6 H14.6 V21.3 A1.3 1.3 0 0 1 13.3 22.6 H9.3 A1.3 1.3 0 0 1 8 21.3 V14.6 H1.3 A1.3 1.3 0 0 1 0 13.3 V10 A1.3 1.3 0 0 1 1.3 8.7 H8 V1.3 A1.3 1.3 0 0 1 8.7 0 Z" fill="#aaa"/></svg>
<div class="t" style="left:2386.10px;top:1812.62px;font-size:28.8px;line-height:28.8px;letter-spacing:-0.105px;color:#aaa;font-weight:400;">Add Remote Device</div>
</body></html>
